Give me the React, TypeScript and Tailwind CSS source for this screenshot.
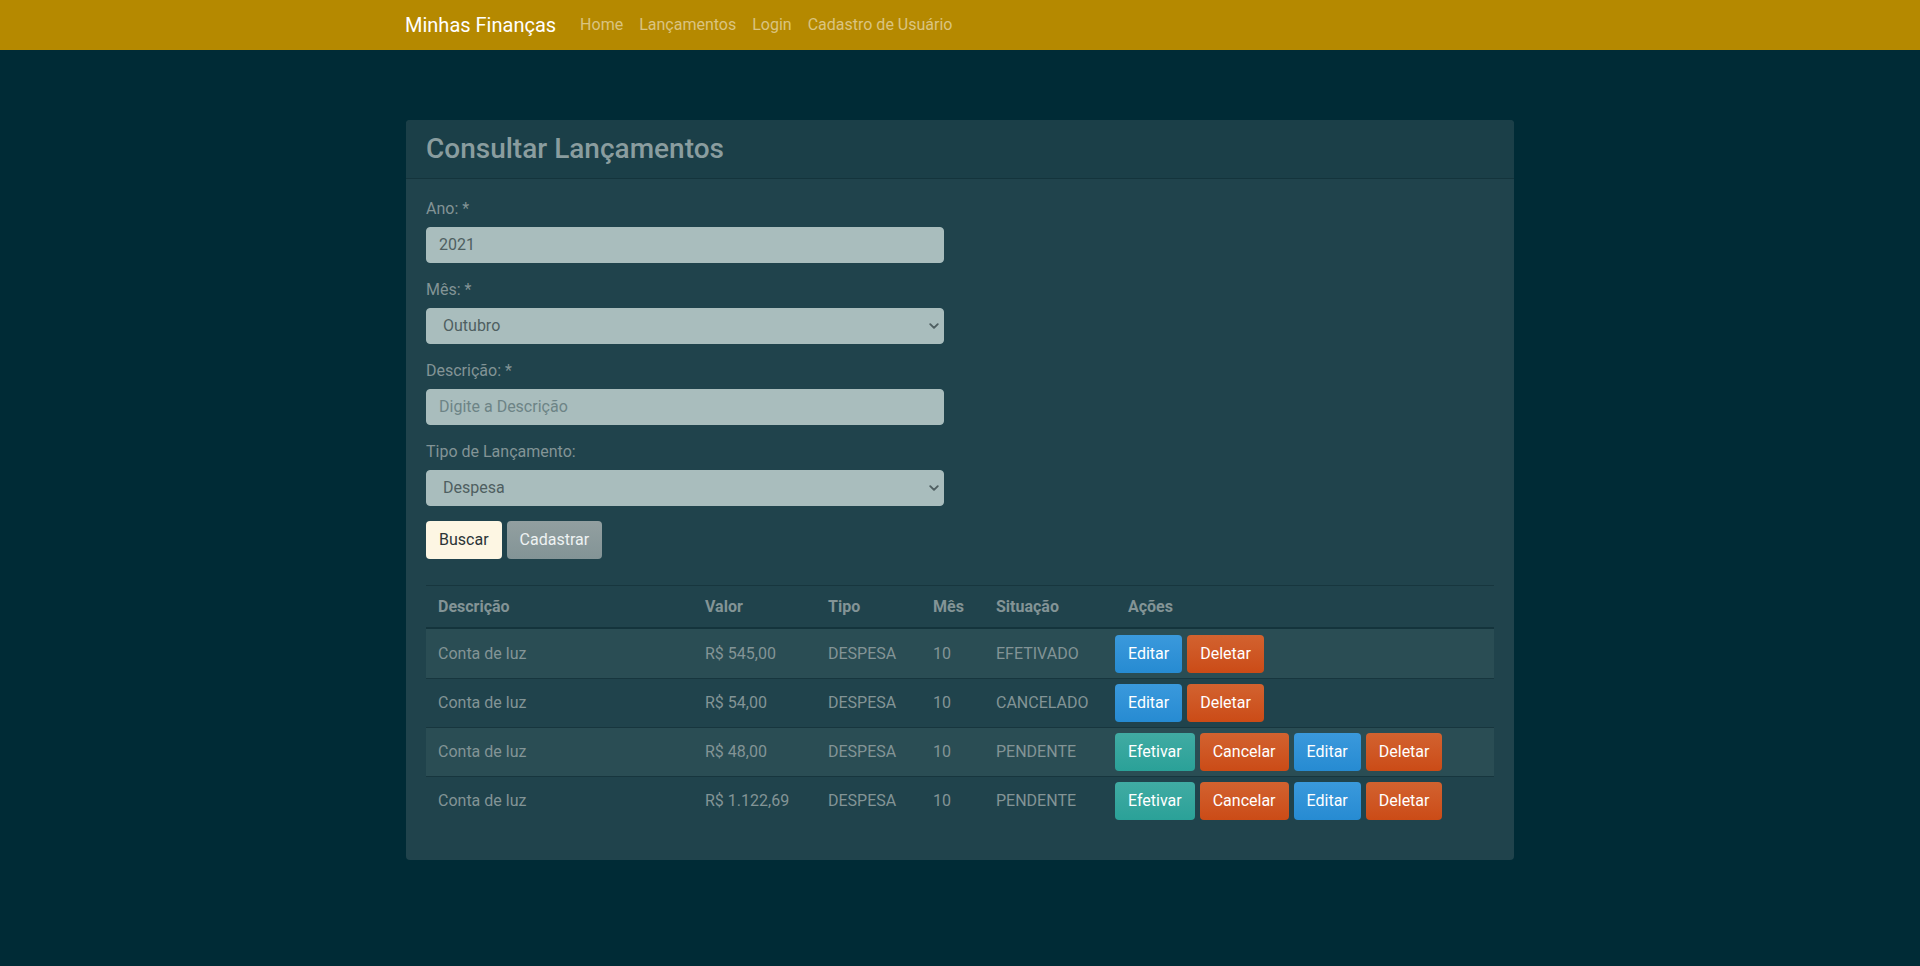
import React from 'react';

interface Lancamento {
  descricao: string;
  valor: string;
  tipo: string;
  mes: number;
  status: 'EFETIVADO' | 'CANCELADO' | 'PENDENTE';
}

const lancamentos: Lancamento[] = [
  { descricao: 'Conta de luz', valor: 'R$ 545,00', tipo: 'DESPESA', mes: 10, status: 'EFETIVADO' },
  { descricao: 'Conta de luz', valor: 'R$ 54,00', tipo: 'DESPESA', mes: 10, status: 'CANCELADO' },
  { descricao: 'Conta de luz', valor: 'R$ 48,00', tipo: 'DESPESA', mes: 10, status: 'PENDENTE' },
  { descricao: 'Conta de luz', valor: 'R$ 1.122,69', tipo: 'DESPESA', mes: 10, status: 'PENDENTE' },
];

const cols = 'grid grid-cols-[267px_123px_105px_63px_119px_1fr]';

function Chevron() {
  return (
    <svg width="10" height="10" viewBox="0 0 16 16" className="text-[#4f5f61]">
      <path d="M2 5l6 6 6-6" fill="none" stroke="currentColor" strokeWidth="3" strokeLinecap="round" strokeLinejoin="round" />
    </svg>
  );
}

function Field({ label, children }: { label: string; children: React.ReactNode }) {
  return (
    <div className="mb-[15px] w-[518px]">
      <div className="mb-[6px] leading-6 text-[#839496]">{label}</div>
      {children}
    </div>
  );
}

function FakeSelect({ value }: { value: string }) {
  return (
    <div className="flex h-[36px] items-center justify-between rounded-[4px] border border-[#a9bdbd] bg-[#a9bdbd] pl-[16px] pr-[4px] text-[#4f5f61]">
      <span>{value}</span>
      <Chevron />
    </div>
  );
}

function Btn({ color, children }: { color: string; children: React.ReactNode }) {
  return (
    <button className={`h-[38px] rounded-[4px] px-[13px] text-white ${color}`}>{children}</button>
  );
}

const blue = 'bg-linear-to-b from-[#3a99dc] to-[#268bd2]';
const orange = 'bg-linear-to-b from-[#d2622f] to-[#cb4b16]';
const teal = 'bg-linear-to-b from-[#40aba3] to-[#2aa198]';

export default function App() {
  return (
    <div className="min-h-[966px] bg-[#002b36] font-['Roboto',sans-serif] text-base text-[#839496]">
      <nav className="h-[50px] bg-[#b58900]">
        <div className="mx-auto flex h-full w-[1140px] items-center px-[15px]">
          <span className="mr-4 text-[20px] text-white">Minhas Finanças</span>
          {['Home', 'Lançamentos', 'Login', 'Cadastro de Usuário'].map((l) => (
            <a key={l} className="px-2 text-[#dac480]">{l}</a>
          ))}
        </div>
      </nav>

      <div className="mx-auto w-[1140px] px-[16px] pt-[70px]">
        <div className="overflow-hidden rounded-[4px] bg-[#20434c]">
          <div className="border-b border-[#14343c] bg-[#1b3f48] px-5 py-3">
            <h3 className="text-[28px] leading-[34px] font-medium text-[#8a9d9f]">Consultar Lançamentos</h3>
          </div>
          <div className="px-5 pt-[18px] pb-[19px]">
            <Field label="Ano: *">
              <div className="flex h-[36px] items-center rounded-[4px] border border-[#a9bdbd] bg-[#a9bdbd] px-3 text-[#4f5f61]">2021</div>
            </Field>
            <Field label="Mês: *">
              <FakeSelect value="Outubro" />
            </Field>
            <Field label="Descrição: *">
              <div className="flex h-[36px] items-center rounded-[4px] border border-[#a9bdbd] bg-[#a9bdbd] px-3 text-[#6d8486]">Digite a Descrição</div>
            </Field>
            <Field label="Tipo de Lançamento:">
              <FakeSelect value="Despesa" />
            </Field>

            <div className="mt-[3px] flex gap-[5px]">
              <button className="h-[38px] rounded-[4px] bg-[#fdf6e3] px-[13px] text-[#2b3436]">Buscar</button>
              <button className="h-[38px] rounded-[4px] bg-linear-to-b from-[#929fa0] to-[#839496] px-[13px] text-[#eef2f2]">Cadastrar</button>
            </div>

            <div className="mt-[26px] mb-4">
              <div className={`${cols} h-[44px] items-center border-t border-b-2 border-t-[#17363e] border-b-[#14343c] font-bold`}>
                <div className="px-3">Descrição</div>
                <div className="px-3">Valor</div>
                <div className="px-3">Tipo</div>
                <div className="px-3">Mês</div>
                <div className="px-3">Situação</div>
                <div className="pl-[25px]">Ações</div>
              </div>
              {lancamentos.map((l, i) => (
                <div
                  key={i}
                  className={`${cols} h-[49px] items-center ${i > 0 ? 'border-t border-[#17363e]' : ''} ${i % 2 === 0 ? 'bg-[#2a4d54]' : ''}`}
                >
                  <div className="px-3">{l.descricao}</div>
                  <div className="px-3">{l.valor}</div>
                  <div className="px-3">{l.tipo}</div>
                  <div className="px-3">{l.mes}</div>
                  <div className="px-3">{l.status}</div>
                  <div className="flex gap-[5px] px-3">
                    {l.status === 'PENDENTE' && (
                      <>
                        <Btn color={teal}>Efetivar</Btn>
                        <Btn color={orange}>Cancelar</Btn>
                      </>
                    )}
                    <Btn color={blue}>Editar</Btn>
                    <Btn color={orange}>Deletar</Btn>
                  </div>
                </div>
              ))}
            </div>
          </div>
        </div>
      </div>
    </div>
  );
}
